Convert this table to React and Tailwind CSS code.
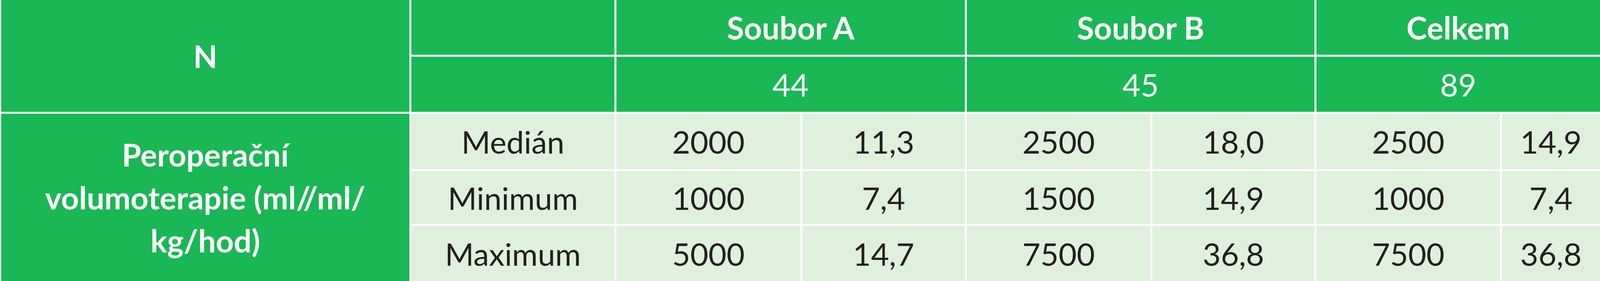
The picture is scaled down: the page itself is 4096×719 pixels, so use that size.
const groups = [
  { name: "Soubor A", n: "44" },
  { name: "Soubor B", n: "45" },
  { name: "Celkem", n: "89" },
];

const rows = [
  { label: "Medián", values: ["2000", "11,3", "2500", "18,0", "2500", "14,9"] },
  { label: "Minimum", values: ["1000", "7,4", "1500", "14,9", "1000", "7,4"] },
  { label: "Maximum", values: ["5000", "14,7", "7500", "36,8", "7500", "36,8"] },
];

const head = "bg-[#1ab755] text-white flex items-center justify-center text-center";
const body = "bg-[#dff1dc] text-[#231f20] flex items-center justify-center text-center";

export default function App() {
  return (
    <div className="w-[4096px] h-[719px] bg-white overflow-hidden pl-[3px] font-['Lato','Liberation_Sans',sans-serif] text-[80px] leading-none">
      <div className="grid h-full grid-cols-[1045px_520px_471px_416px_470px_415px_470px_1fr] grid-rows-[140px_141px_142px_135px_141px] gap-[5px]">
        {/* N */}
        <div className={`${head} row-span-2 font-bold`}>N</div>
        <div className={head}></div>
        {groups.map((g) => (
          <div key={g.name} className={`${head} col-span-2 font-bold`}>
            {g.name}
          </div>
        ))}
        <div className={head}></div>
        {groups.map((g) => (
          <div key={g.n} className={`${head} col-span-2`}>
            {g.n}
          </div>
        ))}

        {/* body */}
        <div className={`${head} row-span-3 font-bold leading-[110px]`}>
          <span>
            Peroperační
            <br />
            volumoterapie (ml//ml/
            <br />
            kg/hod)
          </span>
        </div>
        {rows.map((r) => (
          <div key={r.label} className="contents">
            <div className={body}>{r.label}</div>
            {r.values.map((v, j) => (
              <div key={j} className={body}>
                {v}
              </div>
            ))}
          </div>
        ))}
      </div>
    </div>
  );
}
